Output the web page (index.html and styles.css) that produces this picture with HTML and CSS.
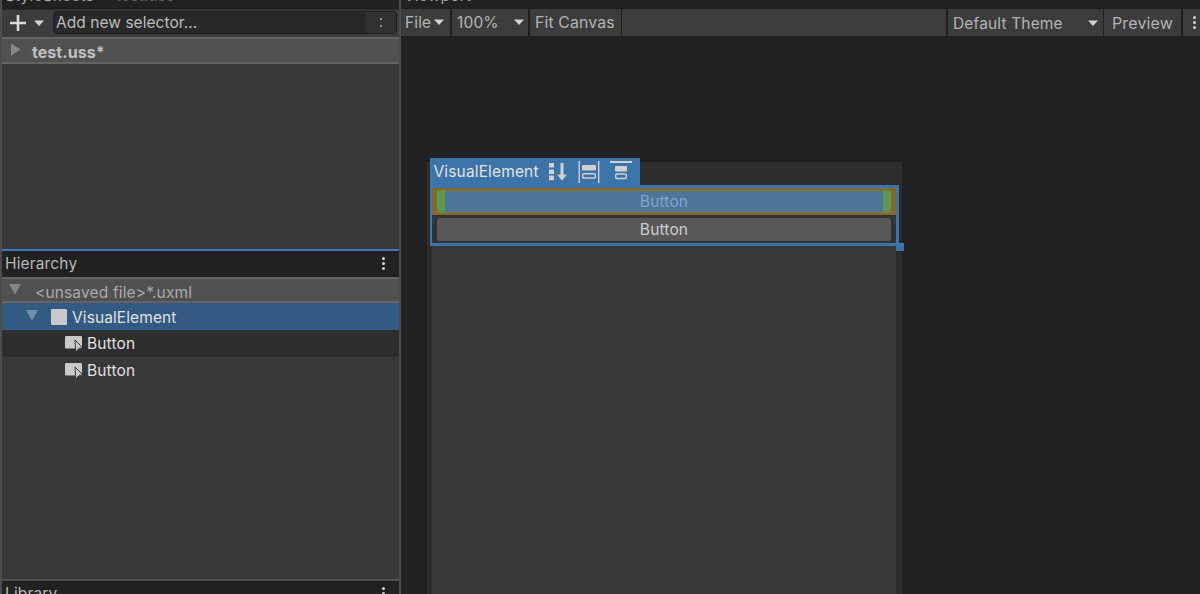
FILE: index.html
```html
<!DOCTYPE html>
<html lang="en">
<head>
<meta charset="utf-8">
<title>UI Builder</title>
<link rel="stylesheet" href="styles.css">
</head>
<body>
<div class="app">
  <aside class="left">
    <section class="pane sheets">
      <div class="cliphead"><span>StyleSheets</span><span class="dim">test.uss</span></div>
      <div class="sheetbar">
        <div class="addbtn">
          <svg class="plus" width="18" height="18" viewBox="0 0 18 18"><path d="M7.700 1h2.600v6.700H17v2.600h-6.700V17H7.700v-6.700H1V7.700h6.700z"/></svg>
          <svg class="caret" width="12" height="7" viewBox="0 0 12 7"><path d="M1 .5h10L6 6z"/></svg>
        </div>
        <div class="selector"><span class="seltext">Add new selector...</span><span class="selmore"><i></i><i></i></span></div>
      </div>
      <div class="row uss">
        <svg width="12" height="13" viewBox="0 0 12 13"><path d="M1 .5 11 6.500 1 12.500z"/></svg>
        <b>test.uss*</b>
      </div>
    </section>
    <section class="pane hier">
      <div class="panehead"><span>Hierarchy</span><span class="dots"><i></i><i></i><i></i></span></div>
      <div class="row uxml">
        <svg width="14" height="12" viewBox="0 0 14 12"><path d="M1 1h12L7 11.500z"/></svg>
        <span>&lt;unsaved file&gt;*.uxml</span>
      </div>
      <div class="item selected">
        <svg width="14" height="12" viewBox="0 0 14 12"><path d="M1 1h12L7 11.500z"/></svg>
        <span class="square"></span>
        <span class="sellabel">VisualElement</span>
      </div>
      <div class="item btnitem stripe">
        <svg width="20" height="18" viewBox="0 0 20 18"><path class="bi" d="M2 1h15a1 1 0 0 1 1 1v10.500a1 1 0 0 1-1 1H2a1 1 0 0 1-1-1V2a1 1 0 0 1 1-1z"/><path class="arrow" d="M11 5 19 13l-3.600.2L13 15.500l-1.200 1.800z"/></svg>
        <span>Button</span>
      </div>
      <div class="item btnitem">
        <svg width="20" height="18" viewBox="0 0 20 18"><path class="bi" d="M2 1h15a1 1 0 0 1 1 1v10.500a1 1 0 0 1-1 1H2a1 1 0 0 1-1-1V2a1 1 0 0 1 1-1z"/><path class="arrow" d="M11 5 19 13l-3.600.2L13 15.500l-1.200 1.800z"/></svg>
        <span>Button</span>
      </div>
    </section>
    <section class="pane lib">
      <div class="panehead"><span>Library</span><span class="dots"><i></i><i></i><i></i></span></div>
    </section>
  </aside>
  <main class="view">
    <div class="cliphead"><span>Viewport</span></div>
    <div class="toolbar">
      <div class="tb file"><span>File</span><svg width="12" height="7" viewBox="0 0 12 7"><path d="M1 .5h10L6 6z"/></svg></div>
      <div class="tb zoom"><span>100%</span><svg width="12" height="7" viewBox="0 0 12 7"><path d="M1 .5h10L6 6z"/></svg></div>
      <div class="tb fit"><span>Fit Canvas</span></div>
      <div class="tb spacer"></div>
      <div class="tb theme"><span>Default Theme</span><svg width="12" height="7" viewBox="0 0 12 7"><path d="M1 .5h10L6 6z"/></svg></div>
      <div class="tb preview"><span>Preview</span></div>
      <div class="tb more"><span class="dots"><i></i><i></i><i></i></span></div>
    </div>
    <div class="stage">
      <div class="canvas">
        <div class="canvasbody"></div>
      </div>
      <div class="seltab">
        <span>VisualElement</span>
        <svg class="flexdir" width="20" height="19" viewBox="0 0 20 19"><path d="M1 1h5v4.600H1zM1 7.500h5v4.600H1zM1 13.600h5v4.600H1z"/><path d="M12.500 1h3v11.500h3.500L14 18.500l-5-6h3.500z"/></svg>
        <svg class="flexalign" width="22" height="22" viewBox="0 0 22 22"><path d="M.5 0h1.400v22H.5zM20 0h1.400v22H20z"/><rect x="4" y="4" width="14" height="5.500" rx="1"/><rect class="hollow" x="4.700" y="12.700" width="12.600" height="4.300" rx="1"/></svg>
        <svg class="flexjust" width="22" height="19" viewBox="0 0 22 19"><path d="M0 0h22v2H0z"/><rect x="5" y="5" width="12" height="5.500" rx="1"/><rect class="hollow" x="5.700" y="13" width="10.600" height="4.500" rx="1"/></svg>
      </div>
      <div class="selbox">
        <div class="b1margin"><div class="b1border"><div class="b1content">Button</div></div></div>
        <div class="b2">Button</div>
      </div>
      <div class="handle"></div>
    </div>
  </main>
</div>
</body>
</html>
```
FILE: styles.css
```css
* { box-sizing: border-box; }
html, body { margin: 0; height: 100%; overflow: hidden; }
body { background: #212121; color: #c4c4c4; font: 15.500px Inter, "Noto Sans", sans-serif; letter-spacing: .15px; }
.app { display: flex; width: 1200px; height: 594px; }

.left { width: 401px; height: 594px; flex: none; display: flex; flex-direction: column; border-left: 2px solid #4c4c4c; border-right: 2px solid #4c4c4c; overflow: hidden; }
.pane { display: flex; flex-direction: column; background: #383838; }
.sheets { height: 249px; flex: none; }
.hier { height: 330px; flex: none; border-top: 2px solid #3a76bb; }
.lib { flex: 1; border-top: 2px solid #4f4f4f; background: #212121; }

.cliphead { height: 9px; display: flex; gap: 22px; align-items: flex-end; background: #212121; overflow: hidden; padding: 0 0 5px 3px; line-height: 16px; color: #a8a8a8; flex: none; }
.cliphead span { display: block; }
.cliphead .dim { color: #5f5f5f; }

.sheetbar { height: 28px; display: flex; align-items: flex-start; background: #3c3c3c; border-top: 1px solid #2a2a2a; flex: none; padding-right: 2px; }
.addbtn { width: 48px; height: 26px; display: flex; align-items: center; gap: 6px; padding-left: 7px; }
.plus path { fill: #dcdcdc; }
.caret path { fill: #d2d2d2; }
.selector { flex: 1; height: 23px; margin: 1px 0 0 3px; display: flex; justify-content: space-between; align-items: center; background: #292929; border: 1px solid #1f1f1f; border-radius: 4px; padding-left: 2px; color: #bdbdbd; }
.seltext { letter-spacing: .05px; }
.selmore { width: 30px; height: 21px; display: flex; flex-direction: column; align-items: center; justify-content: center; gap: 5px; background: #313131; border-radius: 0 3px 3px 0; }
.selmore i { width: 2px; height: 2px; background: #8f8f8f; }

.row { display: flex; align-items: center; height: 26px; background: #505050; border-top: 2px solid #636363; border-bottom: 2px solid #636363; flex: none; }
.row svg path { fill: #858585; }
.uss { padding-left: 8px; gap: 10px; height: 27px; }
.uss svg { margin-top: -3px; }
.uss b { font-weight: 700; font-size: 16px; letter-spacing: .05px; color: #c0c0c0; padding-top: 2px; }
.uxml { padding-left: 6px; gap: 13px; color: #a9a9a9; }
.uxml svg { margin-top: -3px; }
.uxml span { padding-top: 4px; }

.panehead { height: 26px; display: flex; align-items: center; justify-content: space-between; background: #212121; padding: 0 14px 1px 3px; flex: none; color: #b8b8b8; }
.dots { display: flex; flex-direction: column; gap: 2px; }
.dots i { width: 3px; height: 3px; background: #d4d4d4; border-radius: 50%; }

.item { display: flex; align-items: center; height: 27px; color: #e0e0e0; flex: none; }
.selected { background: #335a82; padding-left: 23px; }
.selected svg { margin-top: -4px; }
.selected svg path { fill: #6f8fae; }
.square { width: 16px; height: 16px; margin: 0 5px 0 12px; background: #c9c9c9; border-radius: 1px; }
.sellabel { padding-top: 2px; letter-spacing: .1px; }
.btnitem { padding-left: 62px; gap: 3px; }
.stripe { background: #2e2e2e; }
.bi { fill: #c9c9c9; }
.arrow { fill: #c9c9c9; stroke: #2e2e2e; stroke-width: .9; }

.view { flex: 1; min-width: 0; display: flex; flex-direction: column; background: #212121; }
.toolbar { height: 27px; display: flex; gap: 2px; flex: none; }
.tb { display: flex; align-items: center; background: #3c3c3c; height: 27px; color: #b4b4b4; }
.tb svg path { fill: #d2d2d2; }
.file { width: 49px; padding-left: 4px; gap: 2px; }
.zoom { width: 76px; padding: 0 3px 0 5px; justify-content: space-between; }
.fit { width: 91px; padding-left: 5px; white-space: nowrap; font-size: 15.800px; }
.spacer { flex: 1; margin-left: -1px; }
.theme { width: 155px; padding: 0 4px 0 5px; justify-content: space-between; }
.theme span { padding-top: 2px; }
.theme svg { margin-top: 2px; }
.preview { width: 77px; padding-left: 8px; margin-left: -1px; font-size: 16px; }
.more { width: 17px; padding-left: 10px; }

.stage { flex: 1; position: relative; }
.canvas { position: absolute; left: 26px; top: 126px; width: 475px; height: 445px; background: #2d2d2d; padding: 83px 6px 0 5px; }
.canvasbody { height: 100%; background: #383838; }
.seltab { position: absolute; left: 29px; top: 122px; width: 210px; height: 28px; display: flex; align-items: center; background: #3c73a8; padding: 0 0 1px 3.500px; color: #e2e2e2; }
.seltab svg path, .seltab svg rect { fill: #d0d0d0; }
.seltab svg .hollow { fill: none; stroke: #d0d0d0; stroke-width: 1.400; }
.flexdir { margin-left: 9px; }
.flexalign { margin-left: 10px; }
.flexjust { margin: -3px 0 0 10px; }
.selbox { position: absolute; left: 29px; top: 149px; width: 469px; height: 61px; border: solid #3c73a8; border-width: 3px 3px 3px 2px; display: flex; flex-direction: column; background: #333; }
.b1margin { height: 27px; flex: none; background: #86652f; padding: 2px 5px; }
.b1border { height: 100%; background: #5b9848; padding: 0 8px; border-top: 1px solid #7b7a3a; border-bottom: 1px solid #7b7a3a; }
.b1content { height: 100%; background: #4f759a; color: #7da6cb; display: flex; align-items: center; justify-content: center; }
.b2 { height: 23px; margin: 3px 5px 0; background: #585858; border-radius: 3px; color: #cdcdcd; display: flex; align-items: center; justify-content: center; flex: none; }
.handle { position: absolute; left: 495px; top: 207px; width: 8px; height: 8px; background: #3c73a8; }
```
